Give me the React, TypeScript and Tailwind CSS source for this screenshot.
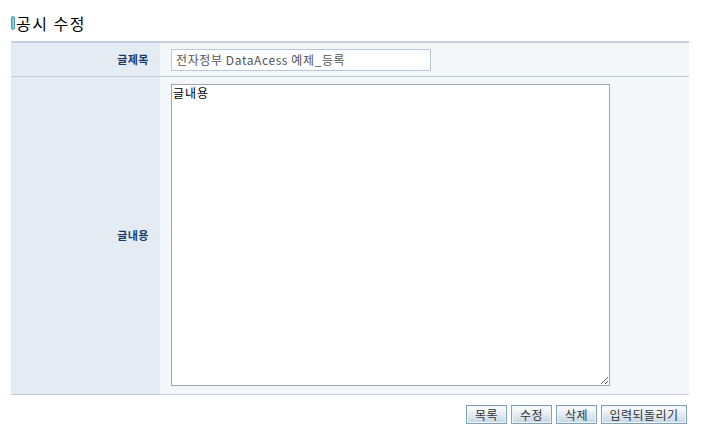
const font = { fontFamily: '"Noto Sans CJK KR", "Noto Sans", sans-serif' };

function Btn({ label, w }: { label: string; w: string }) {
  return (
    <button
      className={`${w} h-[19px] border border-[#7fa3b3] shadow-[inset_0_0_0_1px_#eef4f8] bg-gradient-to-b from-[#ffffff] to-[#c6d6e3] text-[12px] leading-[17px] text-[#333] tracking-[0.5px]`}
    >
      {label}
    </button>
  );
}

export default function App() {
  return (
    <main className="min-h-screen bg-white pt-[13px]" style={font}>
      <h2 className="flex items-center gap-[1px] pl-[11px] h-[20px] text-[16px] font-normal text-black">
        <span className="w-[4px] h-[14px] rounded-[2px] bg-gradient-to-r from-[#5ab7c9] to-[#a9e2ec] border border-[#4b9fb0]" />
        <span className="tracking-[1.5px]">공시 수정</span>
      </h2>

      <div className="ml-[11px] w-[678px] mt-[8px] border-t-2 border-[#c5d0da] border-b border-b-[#c3ccd6]">
        <div className="flex h-[34px] border-b border-[#c3ccd6]">
          <div className="w-[149px] bg-[#e4ebf2] flex items-center justify-end pr-[11px] text-[11px] font-bold text-[#173c6b] tracking-[0.5px]">
            글제목
          </div>
          <div className="flex-1 bg-[#f3f7fa] flex items-center pl-[11px]">
            <input
              readOnly
              value="전자정부 DataAcess 예제_등록"
              className="w-[260px] h-[22px] border border-[#b9c8d6] bg-white px-[4px] text-[12px] tracking-[0.6px] text-[#555] outline-none"
              style={font}
            />
          </div>
        </div>
        <div className="flex h-[317px]">
          <div className="w-[149px] bg-[#e4ebf2] flex items-center justify-end pr-[11px] text-[11px] font-bold text-[#173c6b] tracking-[0.5px]">
            글내용
          </div>
          <div className="flex-1 bg-[#f3f7fa] pl-[11px] pt-[7px]">
            <textarea
              readOnly
              defaultValue="글내용"
              className="block w-[439px] h-[302px] border border-[#a5a5a5] bg-white px-[1px] py-0 text-[12px] leading-[16px] tracking-[1px] text-black outline-none resize"
              style={font}
            />
          </div>
        </div>
      </div>

      <div className="ml-[11px] w-[678px] flex justify-end gap-[4px] mt-[10px] pr-[2px]">
        <Btn label="목록" w="w-[41px]" />
        <Btn label="수정" w="w-[41px]" />
        <Btn label="삭제" w="w-[41px]" />
        <Btn label="입력되돌리기" w="w-[86px]" />
      </div>
    </main>
  );
}
